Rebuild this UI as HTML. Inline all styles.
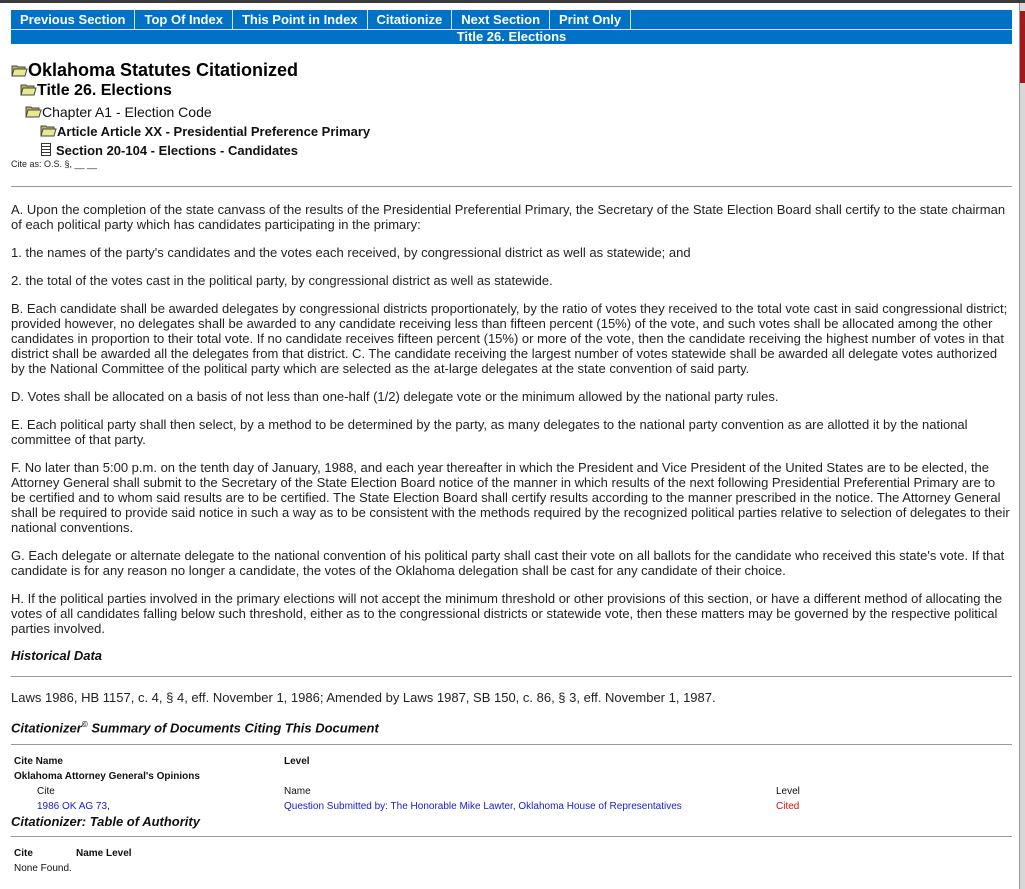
<!DOCTYPE html>
<html><head><meta charset="utf-8"><style>
body{margin:0;background:#fff;font-family:"Liberation Sans",Arial,sans-serif;color:#222;width:1025px;height:889px;overflow:hidden;position:relative}
.topbar{position:absolute;left:0;top:0;width:1025px;height:3px;background:#3a3a3a}
.rs{position:absolute;left:1019px;top:3px;width:6px;height:886px;background:#d8d8d8;border-left:1px solid #999}
.rs .red{position:absolute;top:8px;left:0;width:6px;height:72px;background:#a01a1a}
.wrap{position:absolute;left:11px;top:0;width:1001px}
.nav{margin-top:10px;background:#0072c6;height:19px;display:flex;border-bottom:1px solid #cfe6ff}
.nav a{color:#fff;font-weight:bold;font-size:13px;line-height:19px;padding:0 9px;border-right:1px solid #cfe6ff;text-decoration:none;white-space:nowrap}
.nav2{background:#0072c6;height:14px;color:#fff;font-weight:bold;font-size:13px;line-height:14px;text-align:center}
.f{display:inline-block;width:17px;height:13px;vertical-align:-1px}
h{display:block;font-weight:bold;color:#000}
p{margin:0 0 13px;font-size:13px;line-height:15px}
hr{border:0;border-top:1px solid #999;margin:0}
.it{font-weight:bold;font-style:italic;font-size:13px;color:#111}
.s{font-size:10px;color:#111}
a.l{color:#1a1acc}
</style></head><body>
<svg width="0" height="0" style="position:absolute"><defs><symbol id="fd" viewBox="0 0 17 13"><path d="M1 2h5l1 1h7v9H1z" fill="#b8b860" stroke="#444"/><path d="M3 5h13l-2 7H1z" fill="#e8e890" stroke="#444"/></symbol></defs></svg>
<div class="topbar"></div>
<div class="rs"><div class="red"></div></div>
<div class="wrap">
<div class="nav"><a>Previous Section</a><a>Top Of Index</a><a>This Point in Index</a><a>Citationize</a><a>Next Section</a><a>Print Only</a></div>
<div class="nav2">Title 26. Elections</div>
<div style="position:absolute;top:60px;left:0;font-size:18px"><h><svg class="f"><use href="#fd"/></svg>Oklahoma Statutes Citationized</h></div>
<div style="position:absolute;top:82px;left:9px;font-size:16px"><h><svg class="f"><use href="#fd"/></svg>Title 26. Elections</h></div>
<div style="position:absolute;top:104px;left:14px;font-size:14px;color:#111"><svg class="f"><use href="#fd"/></svg>Chapter A1 - Election Code</div>
<div style="position:absolute;top:124px;left:29px;font-size:13px;font-weight:bold;color:#111"><svg class="f"><use href="#fd"/></svg>Article Article XX - Presidential Preference Primary</div>
<div style="position:absolute;top:143px;left:30px;font-size:13px;font-weight:bold;color:#111"><span style="display:inline-block;width:10px;height:13px;border:1px solid #333;box-sizing:border-box;vertical-align:-1px;margin-right:5px;background:repeating-linear-gradient(#fff 0 2px,#333 2px 3px)"></span>Section 20-104 - Elections - Candidates</div>
<div style="position:absolute;top:159px;left:0;font-size:9px;color:#222">Cite as: O.S. §, __ __</div>
<div style="position:absolute;top:186px;left:0;width:1001px"><hr>
<div style="padding-top:15px">
<p>A. Upon the completion of the state canvass of the results of the Presidential Preferential Primary, the Secretary of the State Election Board shall certify to the state chairman of each political party which has candidates participating in the primary:</p>
<p>1. the names of the party's candidates and the votes each received, by congressional district as well as statewide; and</p>
<p>2. the total of the votes cast in the political party, by congressional district as well as statewide.</p>
<p>B. Each candidate shall be awarded delegates by congressional districts proportionately, by the ratio of votes they received to the total vote cast in said congressional district; provided however, no delegates shall be awarded to any candidate receiving less than fifteen percent (15%) of the vote, and such votes shall be allocated among the other candidates in proportion to their total vote. If no candidate receives fifteen percent (15%) or more of the vote, then the candidate receiving the highest number of votes in that district shall be awarded all the delegates from that district. C. The candidate receiving the largest number of votes statewide shall be awarded all delegate votes authorized by the National Committee of the political party which are selected as the at-large delegates at the state convention of said party.</p>
<p>D. Votes shall be allocated on a basis of not less than one-half (1/2) delegate vote or the minimum allowed by the national party rules.</p>
<p>E. Each political party shall then select, by a method to be determined by the party, as many delegates to the national party convention as are allotted it by the national committee of that party.</p>
<p>F. No later than 5:00 p.m. on the tenth day of January, 1988, and each year thereafter in which the President and Vice President of the United States are to be elected, the Attorney General shall submit to the Secretary of the State Election Board notice of the manner in which results of the next following Presidential Preferential Primary are to be certified and to whom said results are to be certified. The State Election Board shall certify results according to the manner prescribed in the notice. The Attorney General shall be required to provide said notice in such a way as to be consistent with the methods required by the recognized political parties relative to selection of delegates to their national conventions.</p>
<p>G. Each delegate or alternate delegate to the national convention of his political party shall cast their vote on all ballots for the candidate who received this state's vote. If that candidate is for any reason no longer a candidate, the votes of the Oklahoma delegation shall be cast for any candidate of their choice.</p>
<p>H. If the political parties involved in the primary elections will not accept the minimum threshold or other provisions of this section, or have a different method of allocating the votes of all candidates falling below such threshold, either as to the congressional districts or statewide vote, then these matters may be governed by the respective political parties involved.</p>
</div></div>
<div class="it" style="position:absolute;top:648px;left:0">Historical Data</div>
<div style="position:absolute;top:676px;left:0;width:1001px"><hr></div>
<div style="position:absolute;top:690px;left:0;font-size:13px">Laws 1986, HB 1157, c. 4, § 4, eff. November 1, 1986; Amended by Laws 1987, SB 150, c. 86, § 3, eff. November 1, 1987.</div>
<div class="it" style="position:absolute;top:720px;left:0">Citationizer<sup style="font-size:8px">©</sup> Summary of Documents Citing This Document</div>
<div style="position:absolute;top:744px;left:0;width:1001px"><hr></div>
<div class="s" style="position:absolute;top:756px;left:3px;font-weight:bold">Cite Name</div>
<div class="s" style="position:absolute;top:756px;left:273px;font-weight:bold">Level</div>
<div class="s" style="position:absolute;top:771px;left:3px;font-weight:bold">Oklahoma Attorney General's Opinions</div>
<div class="s" style="position:absolute;top:786px;left:26px">Cite</div>
<div class="s" style="position:absolute;top:786px;left:273px">Name</div>
<div class="s" style="position:absolute;top:786px;left:765px">Level</div>
<div class="s" style="position:absolute;top:801px;left:26px"><a class="l">1986 OK AG 73</a>,</div>
<div class="s" style="position:absolute;top:801px;left:273px"><a class="l">Question Submitted by: The Honorable Mike Lawter, Oklahoma House of Representatives</a></div>
<div class="s" style="position:absolute;top:801px;left:765px;color:#d01010">Cited</div>
<div class="it" style="position:absolute;top:814px;left:0">Citationizer: Table of Authority</div>
<div style="position:absolute;top:836px;left:0;width:1001px"><hr></div>
<div class="s" style="position:absolute;top:848px;left:3px;font-weight:bold">Cite</div>
<div class="s" style="position:absolute;top:848px;left:65px;font-weight:bold">Name Level</div>
<div class="s" style="position:absolute;top:863px;left:3px">None Found.</div>
</div>
</body></html>
